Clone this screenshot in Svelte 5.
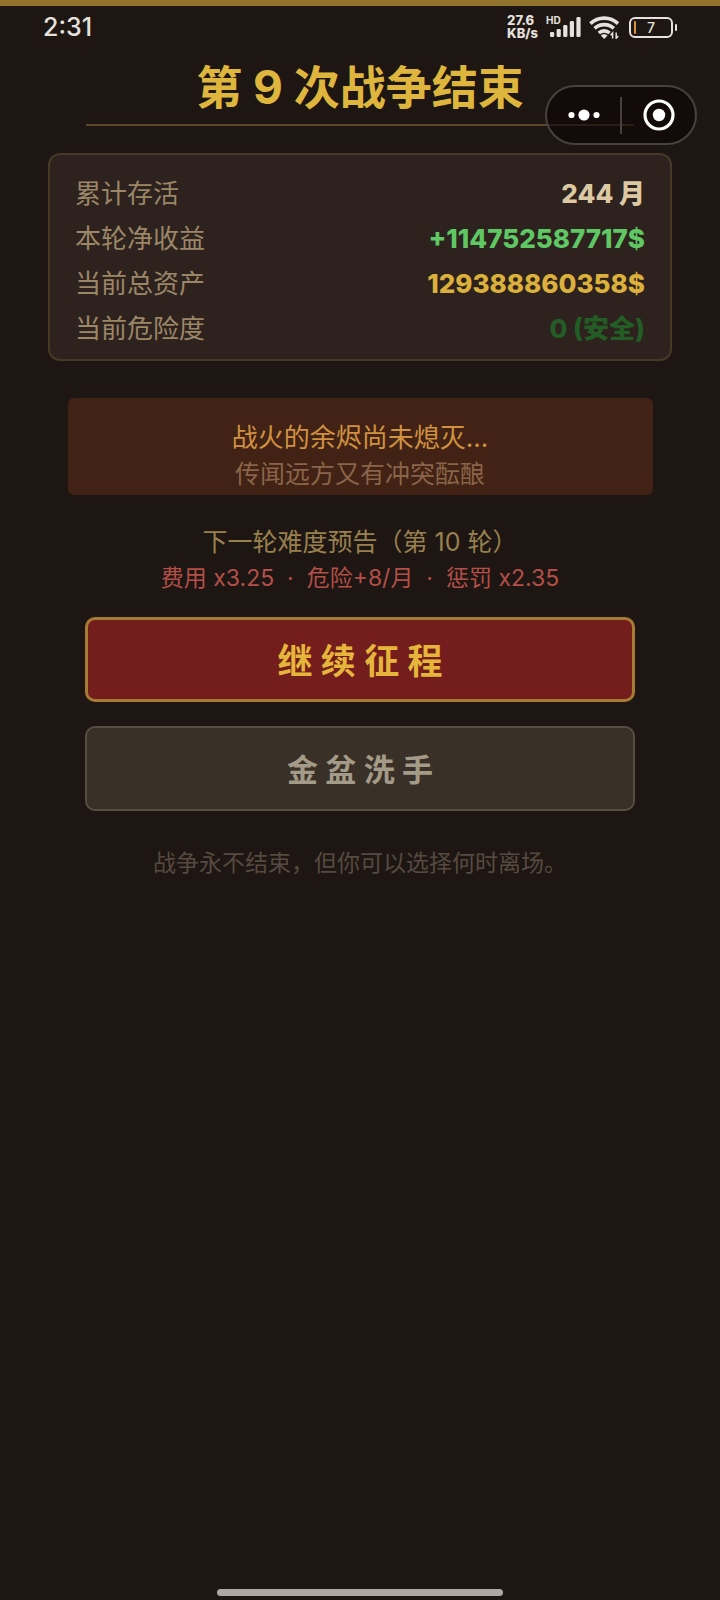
<script lang="ts">
	interface Stat {
		label: string;
		value: string;
		tone: string;
	}

	const stats: Stat[] = [
		{ label: '累计存活', value: '244 月', tone: 'plain' },
		{ label: '本轮净收益', value: '+114752587717$', tone: 'profit' },
		{ label: '当前总资产', value: '129388860358$', tone: 'gold' },
		{ label: '当前危险度', value: '0 (安全)', tone: 'safe' }
	];

	const bars = [5, 8, 12, 16, 20];
	const battery = 7;
</script>

<div class="screen">
	<header class="status">
		<span class="time">2:31</span>
		<div class="indicators">
			<span class="speed">27.6<br />KB/s</span>
			<div class="signal">
				<span class="hd">HD</span>
				<svg width="31" height="20" viewBox="0 0 31 20" aria-hidden="true">
					{#each bars as h, i}
						<rect x={i * 6.6} y={20 - h} width="4.2" height={h} rx="1.3" fill="#e6e1df" />
					{/each}
				</svg>
			</div>
			<svg class="wifi" width="32" height="24" viewBox="0 0 32 24" fill="none" aria-hidden="true">
				<g stroke="#e6e1df" stroke-width="3.6">
					<path d="M1.4 8.6a20 20 0 0 1 27.6 0" />
					<path d="M5.6 13.4a14 14 0 0 1 19.2 0" />
					<path d="M9.8 18a8 8 0 0 1 10.8 0" />
				</g>
				<path d="M11.8 20.6q3.4-3 6.8 0L15.2 24z" fill="#e6e1df" />
				<path d="M23.6 23.6v-5.6l-2 2.2M27.2 17.6v5.6l2-2.2" stroke="#e6e1df" stroke-width="1.5" />
			</svg>
			<div class="battery">
				<span class="cell">
					<i class="charge" style="width: {battery * 0.3}px"></i>
					{battery}
				</span>
				<i class="cap"></i>
			</div>
		</div>
	</header>

	<div class="capsule">
		<button aria-label="更多">
			<svg width="34" height="34" viewBox="0 0 34 34" fill="#fff">
				<circle cx="4.5" cy="17" r="3.1" />
				<circle cx="17" cy="17" r="5.6" />
				<circle cx="29.5" cy="17" r="3.1" />
			</svg>
		</button>
		<button aria-label="关闭">
			<svg width="34" height="34" viewBox="0 0 34 34">
				<circle cx="17" cy="17" r="14" fill="none" stroke="#fff" stroke-width="3.2" />
				<circle cx="17" cy="17" r="6.2" fill="#fff" />
			</svg>
		</button>
	</div>

	<main>
		<h1>第 9 次战争结束</h1>

		<dl class="card">
			{#each stats as stat}
				<div class="row">
					<dt>{stat.label}</dt>
					<dd class={stat.tone}>{stat.value}</dd>
				</div>
			{/each}
		</dl>

		<section class="rumor">
			<p class="ember">战火的余烬尚未熄灭...</p>
			<p class="hint">传闻远方又有冲突酝酿</p>
		</section>

		<section class="forecast">
			<p class="next">下一轮难度预告（第 10 轮）</p>
			<p class="costs">{'费用 x3.25  ·  危险+8/月  ·  惩罚 x2.35'}</p>
		</section>

		<div class="actions">
			<button class="go">继 续 征 程</button>
			<button class="quit">金 盆 洗 手</button>
		</div>

		<p class="footnote">战争永不结束，但你可以选择何时离场。</p>
	</main>

	<div class="home"></div>
</div>

<style>
	:global(body) {
		background: #1e1612;
	}

	.screen {
		position: relative;
		box-sizing: border-box;
		min-height: 100vh;
		display: flex;
		flex-direction: column;
		border-top: 6px solid #92732e;
		background: #1e1612;
		font-family: Inter, 'Noto Sans CJK SC', sans-serif;
	}

	h1,
	p,
	dl,
	dd {
		margin: 0;
	}

	.status {
		display: flex;
		justify-content: space-between;
		align-items: center;
		height: 42px;
		padding: 0 43px;
		color: #e6e1df;
	}

	.time {
		font-size: 25px;
		font-weight: 500;
	}

	.indicators {
		display: flex;
		align-items: center;
		gap: 8px;
	}

	.speed {
		font-size: 13px;
		line-height: 13px;
		font-weight: 800;
	}

	.signal {
		position: relative;
		display: flex;
		padding-left: 4px;
	}

	.hd {
		position: absolute;
		left: 0;
		top: -3px;
		font-size: 10px;
		line-height: 12px;
		font-weight: 700;
	}

	.battery {
		display: flex;
		align-items: center;
		gap: 2px;
	}

	.cell {
		position: relative;
		box-sizing: border-box;
		width: 44px;
		height: 21px;
		border: 2px solid #e6e1df;
		border-radius: 6px;
		font-size: 14px;
		line-height: 17px;
		font-weight: 500;
		text-align: center;
	}

	.charge {
		position: absolute;
		left: 3px;
		top: 2px;
		bottom: 2px;
		border-radius: 1px;
		background: #d9933a;
	}

	.cap {
		width: 2px;
		height: 7px;
		border-radius: 1px;
		background: #e6e1df;
	}

	.capsule {
		position: absolute;
		top: 79px;
		right: 23px;
		box-sizing: border-box;
		width: 152px;
		height: 60px;
		display: flex;
		align-items: center;
		border: 2px solid #48413d;
		border-radius: 30px;
		background: rgba(10, 5, 3, 0.6);
	}

	.capsule button {
		flex: 1;
		height: 37px;
		display: flex;
		align-items: center;
		justify-content: center;
		padding: 0;
		border: 0;
		background: none;
		cursor: pointer;
	}

	.capsule button + button {
		border-left: 2px solid #48413d;
	}

	main {
		display: flex;
		flex-direction: column;
		align-items: center;
		text-align: center;
	}

	h1 {
		width: 76%;
		padding: 10px 0 8px;
		border-bottom: 2px solid #5c4630;
		color: #deb53d;
		font-size: 46px;
		line-height: 58px;
		font-weight: 700;
	}

	.card {
		box-sizing: border-box;
		width: calc(100% - 96px);
		margin-top: 27px;
		padding: 16px 25px 8px;
		border: 2px solid #483927;
		border-radius: 12px;
		background: #2d221d;
	}

	.row {
		display: flex;
		justify-content: space-between;
		font-size: 26px;
		line-height: 45px;
	}

	dt {
		color: #9b8668;
	}

	dd {
		font-weight: 800;
	}

	.plain {
		color: #dcc9a3;
	}

	.profit {
		color: #5fc764;
	}

	.gold {
		color: #dbb03c;
	}

	.safe {
		color: #235c25;
	}

	.rumor {
		box-sizing: border-box;
		width: calc(100% - 135px);
		margin-top: 37px;
		padding: 22px 0 3px;
		border-radius: 6px;
		background: #412214;
		line-height: 36px;
	}

	.ember {
		color: #d09141;
		font-size: 26px;
	}

	.hint {
		color: #8a6449;
		font-size: 25px;
	}

	.forecast {
		margin-top: 29px;
		line-height: 36px;
	}

	.next {
		color: #99804f;
		font-size: 25px;
	}

	.costs {
		color: #b34f48;
		font-size: 23px;
		white-space: pre;
	}

	.actions {
		width: calc(100% - 170px);
		display: flex;
		flex-direction: column;
		gap: 24px;
		margin-top: 21px;
	}

	.actions button {
		height: 85px;
		padding: 0 0 3px;
		border-radius: 10px;
		font-family: inherit;
		font-weight: 700;
		cursor: pointer;
	}

	.go {
		border: 3px solid #a67c35;
		background: #731d1c;
		color: #e6b53b;
		font-size: 35px;
	}

	.quit {
		border: 2px solid #574e43;
		background: #393027;
		color: #a39a87;
		font-size: 31px;
	}

	.footnote {
		margin-top: 34px;
		color: #564a40;
		font-size: 23px;
		line-height: 36px;
	}

	.home {
		align-self: center;
		width: 286px;
		height: 7px;
		margin: auto 0 4px;
		border-radius: 4px;
		background: #aea7a5;
	}
</style>
